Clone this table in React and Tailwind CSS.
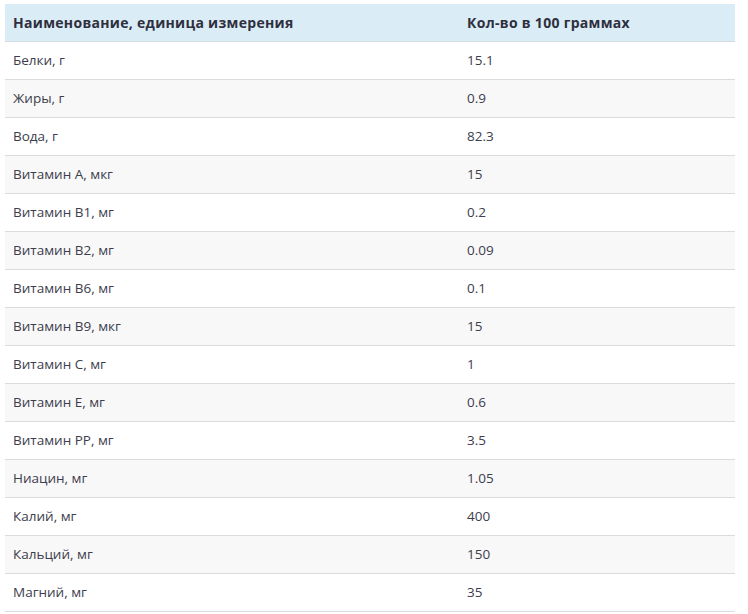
const ROWS = [
  ['Белки, г', '15.1'],
  ['Жиры, г', '0.9'],
  ['Вода, г', '82.3'],
  ['Витамин А, мкг', '15'],
  ['Витамин В1, мг', '0.2'],
  ['Витамин В2, мг', '0.09'],
  ['Витамин В6, мг', '0.1'],
  ['Витамин В9, мкг', '15'],
  ['Витамин C, мг', '1'],
  ['Витамин Е, мг', '0.6'],
  ['Витамин РР, мг', '3.5'],
  ['Ниацин, мг', '1.05'],
  ['Калий, мг', '400'],
  ['Кальций, мг', '150'],
  ['Магний, мг', '35'],
];

export default function App() {
  return (
    <div className="min-h-screen bg-white pt-1 pl-[5px] pr-[13px] font-['Open_Sans',sans-serif] text-[#3d3d4c]">
      <table className="w-[730px] border-collapse text-[13.5px]">
        <thead>
          <tr className="bg-[#daedf7] border-b border-[#d6dde2]">
            <th className="h-[37px] w-[454px] px-2 text-left text-[14px] tracking-[0.3px] font-bold text-[#2f2f3e]">Наименование, единица измерения</th>
            <th className="h-[37px] px-2 text-left text-[14px] tracking-[0.3px] font-bold text-[#2f2f3e]">Кол-во в 100 граммах</th>
          </tr>
        </thead>
        <tbody>
          {ROWS.map(([name, val], i) => (
            <tr key={name} className={`border-b border-[#dcdcdc] ${i % 2 ? 'bg-[#f8f8f8]' : 'bg-white'}`}>
              <td className="h-[38px] px-2">{name}</td>
              <td className="h-[38px] px-2">{val}</td>
            </tr>
          ))}
        </tbody>
      </table>
    </div>
  );
}
